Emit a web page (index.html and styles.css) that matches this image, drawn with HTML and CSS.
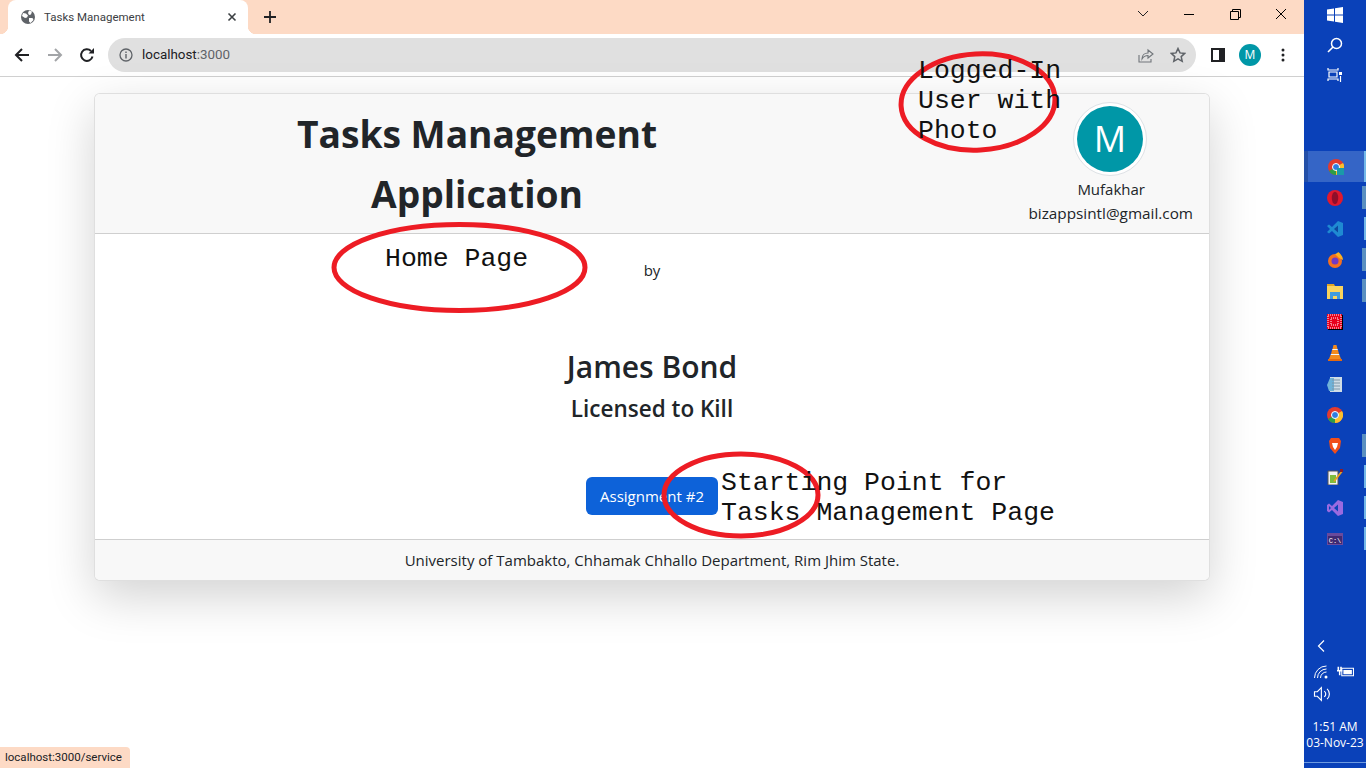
FILE: index.html
```html
<!DOCTYPE html>
<html lang="en">

<head>
    <meta charset="UTF-8">
    <title>Tasks Management</title>
    <link rel="stylesheet" href="styles.css">
</head>

<body>
    <div class="screen">
        <div class="browser">
            <div class="tabstrip">
                <div class="tab">
                    <svg class="favicon" viewBox="0 0 16 16"><circle cx="8" cy="8" r="7" fill="#5f6368"/><path d="M3 4l3 .5 2 2-1 2-2 .5-3-2zM9 1.500l3 1-1 3-2 .5-1-2zM9 9l3.500 0 1 2-3 3-1.500-1.500z" fill="#fff"/></svg>
                    <span class="tab-title">Tasks Management</span>
                    <svg class="tab-close" viewBox="0 0 10 10"><path d="M1.500 1.500l7 7M8.500 1.500l-7 7" stroke="#3c4043" stroke-width="1.600"/></svg>
                </div>
                <svg class="newtab" viewBox="0 0 12 12"><path d="M6 0v12M0 6h12" stroke="#202124" stroke-width="1.800"/></svg>
                <div class="winctl">
                    <span class="winbtn"><svg width="12" height="8" viewBox="0 0 12 8"><path d="M1 1l5 5 5-5" fill="none" stroke="#202124"/></svg></span>
                    <span class="winbtn"><svg width="11" height="11" viewBox="0 0 11 11"><path d="M0 5.500h10" stroke="#000"/></svg></span>
                    <span class="winbtn"><svg width="11" height="11" viewBox="0 0 11 11"><path d="M.5 2.500h8v8h-8zM2.500 2.500v-2h8v8h-2" fill="none" stroke="#000"/></svg></span>
                    <span class="winbtn"><svg width="12" height="12" viewBox="0 0 12 12"><path d="M1 1l10 10M11 1l-10 10" stroke="#000"/></svg></span>
                </div>
            </div>

            <div class="toolbar">
                <svg class="navicon" viewBox="0 0 16 16"><path d="M15 8H2M8 2L2 8l6 6" fill="none" stroke="#202124" stroke-width="2"/></svg>
                <svg class="navicon" viewBox="0 0 16 16"><path d="M1 8h13M8 2l6 6-6 6" fill="none" stroke="#a3a5a8" stroke-width="2"/></svg>
                <svg class="navicon nav-reload" viewBox="0 0 16 16"><path d="M13.500 9.500A5.800 5.800 0 1 1 12 4" fill="none" stroke="#202124" stroke-width="2"/><path d="M9.500 6.500H15V1z" fill="#202124"/></svg>
                <div class="omnibox">
                    <svg class="info" viewBox="0 0 14 14"><circle cx="7" cy="7" r="6" fill="none" stroke="#5f6368" stroke-width="1.300"/><path d="M7 6v4.500M7 3.500v1.500" stroke="#5f6368" stroke-width="1.400"/></svg>
                    <span class="url">localhost<span class="url-port">:3000</span></span>
                    <svg class="omni-share" viewBox="0 0 16 16"><path d="M1 8v7h12v-3" fill="none" stroke="#70757a" stroke-width="1.100"/><path d="M4 12c0-4 3-6 6-6V3l5 4-5 4V8.500c-3 0-4.500 1-6 3.500z" fill="none" stroke="#70757a" stroke-width="1.100"/></svg>
                    <svg class="omni-star" viewBox="0 0 16 16"><path d="M8 1.500l2 4.400 4.800.5-3.600 3.200 1 4.700L8 11.900l-4.200 2.400 1-4.700L1.200 6.400 6 5.900z" fill="none" stroke="#5f6368" stroke-width="1.500"/></svg>
                </div>
                <svg class="panel" viewBox="0 0 14 14"><path d="M0 0h14v14H0z" fill="#202124"/><path d="M2 2h6v10H2z" fill="#fff"/></svg>
                <span class="profile">M</span>
                <svg class="dots" viewBox="0 0 4 14"><circle cx="2" cy="2" r="1.500"/><circle cx="2" cy="7" r="1.500"/><circle cx="2" cy="12" r="1.500"/></svg>
            </div>

            <div class="page">
                <div class="card">
                    <div class="card-header">
                        <h1 class="app-title">Tasks Management Application</h1>
                        <div class="user">
                            <span class="user-photo"><span class="user-initial">M</span></span>
                            <span class="user-name">Mufakhar</span>
                            <span class="user-mail">bizappsintl@gmail.com</span>
                        </div>
                    </div>
                    <div class="card-body">
                        <p class="by">by</p>
                        <h2 class="author">James Bond</h2>
                        <h3 class="tagline">Licensed to Kill</h3>
                        <a class="btn" href="#">Assignment #2</a>
                    </div>
                    <div class="card-footer">University of Tambakto, Chhamak Chhallo Department, Rim Jhim State.</div>
                </div>
                <div class="status">localhost:3000/service</div>
            </div>
        </div>

        <div class="taskbar">
            <svg class="tb-icon" viewBox="0 0 16 16"><path d="M0 2.500l7-1v6H0zM8 1.300L16 0v7.500H8zM0 8.500h7v6l-7-1zM8 8.500h8V16l-8-1.300z" fill="#fff"/></svg>
            <svg class="tb-icon" viewBox="0 0 16 16"><circle cx="9.500" cy="6.500" r="5" fill="none" stroke="#fff" stroke-width="1.500"/><path d="M6 10l-5 5" stroke="#fff" stroke-width="1.600"/></svg>
            <svg class="tb-icon" viewBox="0 0 16 16"><path d="M1 1v2h10V1M1 14v-2h10v2M2 5h8v5H2zM13.500 9v6" fill="none" stroke="#fff" stroke-width="1.200"/><path d="M12 5h3v3h-3z" fill="#fff"/></svg>

            <div class="apps">
                <span class="app app-active"><svg viewBox="0 0 16 16"><circle cx="8" cy="8" r="8" fill="#e33b2e"/><path d="M8 8L1 12a8 8 0 0 0 7 4z" fill="#2d9e47"/><path d="M8 8l7-4a8 8 0 0 1-1 10l-6 2z" fill="#fbc02d"/><circle cx="8" cy="8" r="3.500" fill="#2f7de1" stroke="#fff"/><path d="M9 9h7v7H9z" fill="#1a9aa8"/></svg></span>
                <span class="app app-run"><svg viewBox="0 0 16 16"><circle cx="8" cy="8" r="8" fill="#e0192d"/><ellipse cx="8" cy="8" rx="3.200" ry="6.200" fill="#8f0f2a"/></svg></span>
                <span class="app app-on"><svg viewBox="0 0 16 16"><path d="M11 0l5 2v12l-5 2-6-6-3 2.500L0 11l3-3-3-3 2-1.500L5 6z" fill="#1f8ad2"/><path d="M11 4.500L7 8l4 3.500z" fill="#0d47a1"/></svg></span>
                <span class="app app-run"><svg viewBox="0 0 16 16"><circle cx="8" cy="9" r="7" fill="#f5701f"/><path d="M8 2c3-1 3-2 3-2 3 2 5 5 5 8l-4-2z" fill="#ffb01f"/><circle cx="8" cy="9" r="3.500" fill="#7139c4"/></svg></span>
                <span class="app app-run"><svg viewBox="0 0 16 16"><path d="M0 1h7l1 2H0z" fill="#e0a526"/><path d="M0 3h16v13H0z" fill="#f9d35e"/><path d="M3 9h10v7h-3v-3H6v3H3z" fill="#3d9be0"/></svg></span>
                <span class="app"><svg viewBox="0 0 16 16"><path d="M1 1h15v15H1z" fill="#000"/><path d="M0 0h15v15H0z" fill="#e8001c"/><path d="M1 1h13v13H1zM4 4h7v7H4z" fill="none" stroke="#fff" stroke-dasharray="1 1"/></svg></span>
                <span class="app"><svg viewBox="0 0 16 16"><path d="M6.500 0h3l1 4h-5zM5 5h6l1 4H4zM3.500 10h9l1.500 4H2z" fill="#f28a1e"/><path d="M5.500 4h5l.5 1H5zM4 9h8l.5 1h-9z" fill="#f4f4f4"/><path d="M1 14h14v2H1z" fill="#e46a10"/></svg></span>
                <span class="app"><svg viewBox="0 0 16 16"><path d="M3 1h12v15H3z" fill="#cfdde6"/><path d="M0 9l3-7h4v13H2z" fill="#6fb2d8"/><path d="M5 4h8M5 7h8M5 10h8M5 13h8" stroke="#7d96a8"/></svg></span>
                <span class="app"><svg viewBox="0 0 16 16"><circle cx="8" cy="8" r="8" fill="#e33b2e"/><path d="M8 8L1 12a8 8 0 0 0 7 4z" fill="#2d9e47"/><path d="M8 8l7-4a8 8 0 0 1-7 12z" fill="#fbc02d"/><circle cx="8" cy="8" r="3.500" fill="#2f7de1" stroke="#fff"/></svg></span>
                <span class="app app-run"><svg viewBox="0 0 16 16"><path d="M4 0h8l2 3-1 7-5 6-5-6-1-7z" fill="#f04e1a"/><path d="M5 5h6l-1 4-2 3-2-3z" fill="#fff"/></svg></span>
                <span class="app app-on"><svg viewBox="0 0 16 16"><path d="M1 2h10v14H1z" fill="#f2f2f2" stroke="#555"/><path d="M3 6h6v8H3z" fill="#7dbb3c"/><path d="M7 11l7-9 1.500 1-7 9-2 1z" fill="#e8a020"/><path d="M13 0h3v3h-3z" fill="#8a1c2a"/></svg></span>
                <span class="app app-on"><svg viewBox="0 0 16 16"><path d="M11 0l5 2v12l-5 2-6-6-3 2.500L0 11V5l2-1.500L5 6z" fill="#9a6ae0"/><path d="M11 4.500L7 8l4 3.500zM2 6v4l2-2z" fill="#0c44b8"/></svg></span>
                <span class="app app-on"><svg viewBox="0 0 16 12"><path d="M0 0h16v12H0z" fill="#6a4a9c"/><path d="M1 3h14v8H1z" fill="#3f2a72"/><text x="8" y="9.500" class="cmd-text">C:\</text></svg></span>
            </div>

            <div class="tray">
                <svg class="tray-chev" viewBox="0 0 8 12"><path d="M7 .5L1.500 6 7 11.500" fill="none" stroke="#fff" stroke-width="1.200"/></svg>
                <div class="tray-row">
                    <svg class="tray-icon" viewBox="0 0 16 14"><path d="M1 13A12 12 0 0 1 13 1M4 13a9 9 0 0 1 9-9M7 13a6 6 0 0 1 6-6" fill="none" stroke="#fff"/><circle cx="12.500" cy="12" r="1.500" fill="#fff"/></svg>
                    <svg class="tray-icon" viewBox="0 0 16 12"><path d="M4.500 2.500h11v7h-11z" fill="none" stroke="#fff"/><path d="M6 4h8v4H6zM.5 1H2v3H.5zM3 1h1.500v3H3zM0 4h5v1.500H3.200V9H1.800V5.500H0z" fill="#fff"/></svg>
                </div>
                <div class="tray-row">
                    <svg class="tray-icon tray-vol" viewBox="0 0 16 14"><path d="M1 5h2.500L7 1.500v11L3.500 9H1z" fill="none" stroke="#fff"/><path d="M9.500 4.500a3 3 0 0 1 0 5M12 2.500a6 6 0 0 1 0 9" fill="none" stroke="#fff"/></svg>
                </div>
                <div class="clock">1:51 AM<br>03-Nov-23</div>
            </div>
            <div class="tb-line"></div>
        </div>

        <!-- hand drawn notes on top of the shot -->
        <svg class="marks" viewBox="0 0 1366 768">
            <ellipse cx="978" cy="102" rx="77" ry="48" transform="rotate(-3 978 102)"/>
            <ellipse cx="459.500" cy="267.500" rx="125.500" ry="43"/>
            <ellipse cx="741" cy="495" rx="77" ry="41"/>
        </svg>
        <div class="note note-user">Logged-In<br>User with<br>Photo</div>
        <div class="note note-home">Home Page</div>
        <div class="note note-start">Starting Point for<br>Tasks Management Page</div>
    </div>
</body>

</html>
```

FILE: styles.css
```css
* {
    box-sizing: border-box;
}

html,
body {
    margin: 0;
    padding: 0;
    background: #fff;
}

body {
    font-family: "Open Sans", "Noto Sans", sans-serif;
    color: #212529;
}

.screen {
    width: 1366px;
    height: 768px;
    display: flex;
    position: relative;
    overflow: hidden;
}

.browser {
    width: 1304px;
    display: flex;
    flex-direction: column;
}

/* tab strip */
.tabstrip {
    height: 34px;
    background: #fddac5;
    display: flex;
    align-items: center;
    padding-left: 8px;
}

.tab {
    width: 240px;
    height: 34px;
    position: relative;
    background: #fff;
    border-radius: 8px 8px 0 0;
    display: flex;
    align-items: center;
    padding: 0 11px 0 12px;
}

.tab::before,
.tab::after {
    content: "";
    position: absolute;
    bottom: 0;
    width: 8px;
    height: 8px;
}

.tab::before {
    left: -8px;
    background: radial-gradient(circle at 0 0, #fddac5 8px, #fff 8.500px);
}

.tab::after {
    right: -8px;
    background: radial-gradient(circle at 100% 0, #fddac5 8px, #fff 8.500px);
}

.favicon {
    width: 16px;
    height: 16px;
}

.tab-title {
    flex: 1;
    margin-left: 8px;
    font-family: Roboto, sans-serif;
    font-size: 11.500px;
    color: #3c4043;
}

.tab-close {
    width: 10px;
    height: 10px;
}

.newtab {
    width: 12px;
    height: 12px;
    margin-left: 16px;
}

.winctl {
    margin-left: auto;
    align-self: flex-start;
    display: flex;
}

.winbtn {
    width: 46px;
    height: 28px;
    display: flex;
    align-items: center;
    justify-content: center;
}

/* toolbar */
.toolbar {
    height: 43px;
    background: #fff;
    border-bottom: 1px solid #d0d0d0;
    display: flex;
    align-items: center;
    padding: 0 0 1px 14px;
}

.navicon {
    width: 16px;
    height: 16px;
    margin-right: 17px;
}

.nav-reload {
    margin-left: -1px;
    margin-right: 18px;
}

.omnibox {
    width: 1088px;
    height: 34px;
    margin-left: -5px;
    background: #e0e0e0;
    border-radius: 17px;
    display: flex;
    align-items: center;
    padding: 0 10px 0 11px;
}

.info {
    width: 14px;
    height: 14px;
}

.url {
    flex: 1;
    margin-left: 9px;
    font-family: Roboto, sans-serif;
    font-size: 13.400px;
    color: #202124;
}

.url-port {
    color: #5f6368;
}

.omni-share {
    width: 16px;
    height: 16px;
    margin-right: 16px;
}

.omni-star {
    width: 16px;
    height: 16px;
}

.panel {
    width: 14px;
    height: 14px;
    margin-left: 15px;
}

.profile {
    width: 22px;
    height: 22px;
    margin-left: 14px;
    border-radius: 50%;
    background: #0097a7;
    color: #fff;
    font-size: 12px;
    display: flex;
    align-items: center;
    justify-content: center;
}

.dots {
    width: 4px;
    height: 14px;
    margin-left: 20px;
    fill: #202124;
}

/* page */
.page {
    flex: 1;
    position: relative;
    padding-top: 16px;
}

.card {
    width: 1116px;
    margin: 0 auto;
    background: #fff;
    border: 1px solid rgba(0, 0, 0, .125);
    border-radius: 6px;
    box-shadow: 0 16px 48px rgba(0, 0, 0, .175);
}

.card-header {
    height: 140px;
    background: #f8f8f8;
    border-bottom: 1px solid #cfcfcf;
    border-radius: 5px 5px 0 0;
    display: flex;
}

.app-title {
    width: 764px;
    margin: 0;
    padding: 10px 190px 0;
    font-size: 37.200px;
    font-weight: 700;
    line-height: 60px;
    text-align: center;
}

.user {
    flex: 1;
    display: flex;
    flex-direction: column;
    align-items: flex-end;
    padding: 9px 16px 0 0;
    font-size: 15px;
    line-height: 24px;
}

.user-photo {
    width: 74px;
    height: 74px;
    margin-top: -1px;
    margin-right: 46px;
    padding: 3px;
    background: #fff;
    border: 1px solid #dee2e6;
    border-radius: 50%;
}

.user-initial {
    height: 100%;
    background: #0097a7;
    border-radius: 50%;
    color: #fff;
    font-size: 36px;
    display: flex;
    align-items: center;
    justify-content: center;
}

.user-name {
    margin: 1px 48px 0 0;
}

.user-mail {
    font-size: 15.300px;
    line-height: 24px;
}

.card-body {
    height: 305px;
    text-align: center;
    padding-top: 25px;
}

.by {
    margin: 0;
    font-size: 15px;
    line-height: 22px;
}

.author {
    margin: 68px 0 0;
    font-size: 30px;
    font-weight: 600;
    line-height: 36px;
}

.tagline {
    margin: 8px 0 0;
    font-size: 22.500px;
    font-weight: 600;
    line-height: 32px;
}

.btn {
    display: inline-block;
    width: 132px;
    height: 38px;
    margin-top: 52px;
    background: #0d62d9;
    border-radius: 6px;
    color: #fff;
    font-size: 15px;
    line-height: 38px;
    text-decoration: none;
}

.card-footer {
    height: 41px;
    background: #f8f8f8;
    border-top: 1px solid #cfcfcf;
    border-radius: 0 0 5px 5px;
    font-size: 15px;
    line-height: 40px;
    text-align: center;
}

.status {
    position: absolute;
    left: 0;
    bottom: 0;
    width: 130px;
    height: 21px;
    padding-left: 5px;
    background: #fddac5;
    border-top-right-radius: 4px;
    color: #202124;
    font-family: Roboto, sans-serif;
    font-size: 11.500px;
    line-height: 21px;
}

/* windows taskbar */
.taskbar {
    width: 62px;
    background: #0a41b9;
    display: flex;
    flex-direction: column;
    align-items: center;
    padding-top: 7px;
    color: #fff;
}

.tb-icon {
    width: 16px;
    height: 16px;
    margin-bottom: 14px;
}

.apps {
    width: 100%;
    margin-top: 54px;
    display: flex;
    flex-direction: column;
}

.app {
    height: 31px;
    position: relative;
    display: flex;
    align-items: center;
    justify-content: center;
}

.app svg {
    width: 16px;
    height: 16px;
}

.app-active {
    background: #3565c6;
    border-left: 4px solid #2450a8;
    border-right: 2px solid #74b8e8;
}

.app-on::after,
.app-run::after {
    content: "";
    position: absolute;
    top: 4px;
    bottom: 4px;
    right: 0;
}

.app-on::after {
    width: 2px;
    background: #74b8e8;
}

.app-run::after {
    width: 4px;
    background: #5a8fc0;
}

.cmd-text {
    fill: #fff;
    font-family: "Liberation Mono", monospace;
    font-size: 7px;
    text-anchor: middle;
}

.tray {
    width: 100%;
    margin-top: auto;
    display: flex;
    flex-direction: column;
    align-items: center;
}

.tray-chev {
    width: 8px;
    height: 12px;
    margin: 0 28px 9px 0;
}

.tray-row {
    width: 100%;
    height: 22px;
    display: flex;
    align-items: center;
    padding-left: 9px;
    gap: 7px;
}

.tray-icon {
    width: 17px;
    height: 14px;
}

.tray-vol {
    width: 19px;
    height: 16px;
}

.clock {
    margin-top: 14px;
    font-size: 12px;
    line-height: 16px;
    text-align: center;
    white-space: nowrap;
}

.tb-line {
    width: 100%;
    height: 1px;
    margin: 11px 0 5px;
    background: #6f9be0;
}

/* notes and red rings */
.marks {
    position: absolute;
    left: 0;
    top: 0;
    width: 1366px;
    height: 768px;
    pointer-events: none;
}

.marks ellipse {
    fill: none;
    stroke: #ed1c24;
    stroke-width: 5;
}

.note {
    position: absolute;
    font-family: "Liberation Mono", monospace;
    font-size: 26.500px;
    line-height: 30px;
    color: #111;
    white-space: nowrap;
}

.note-user {
    left: 918px;
    top: 56px;
}

.note-home {
    left: 385px;
    top: 244px;
}

.note-start {
    left: 721px;
    top: 468px;
}
```
